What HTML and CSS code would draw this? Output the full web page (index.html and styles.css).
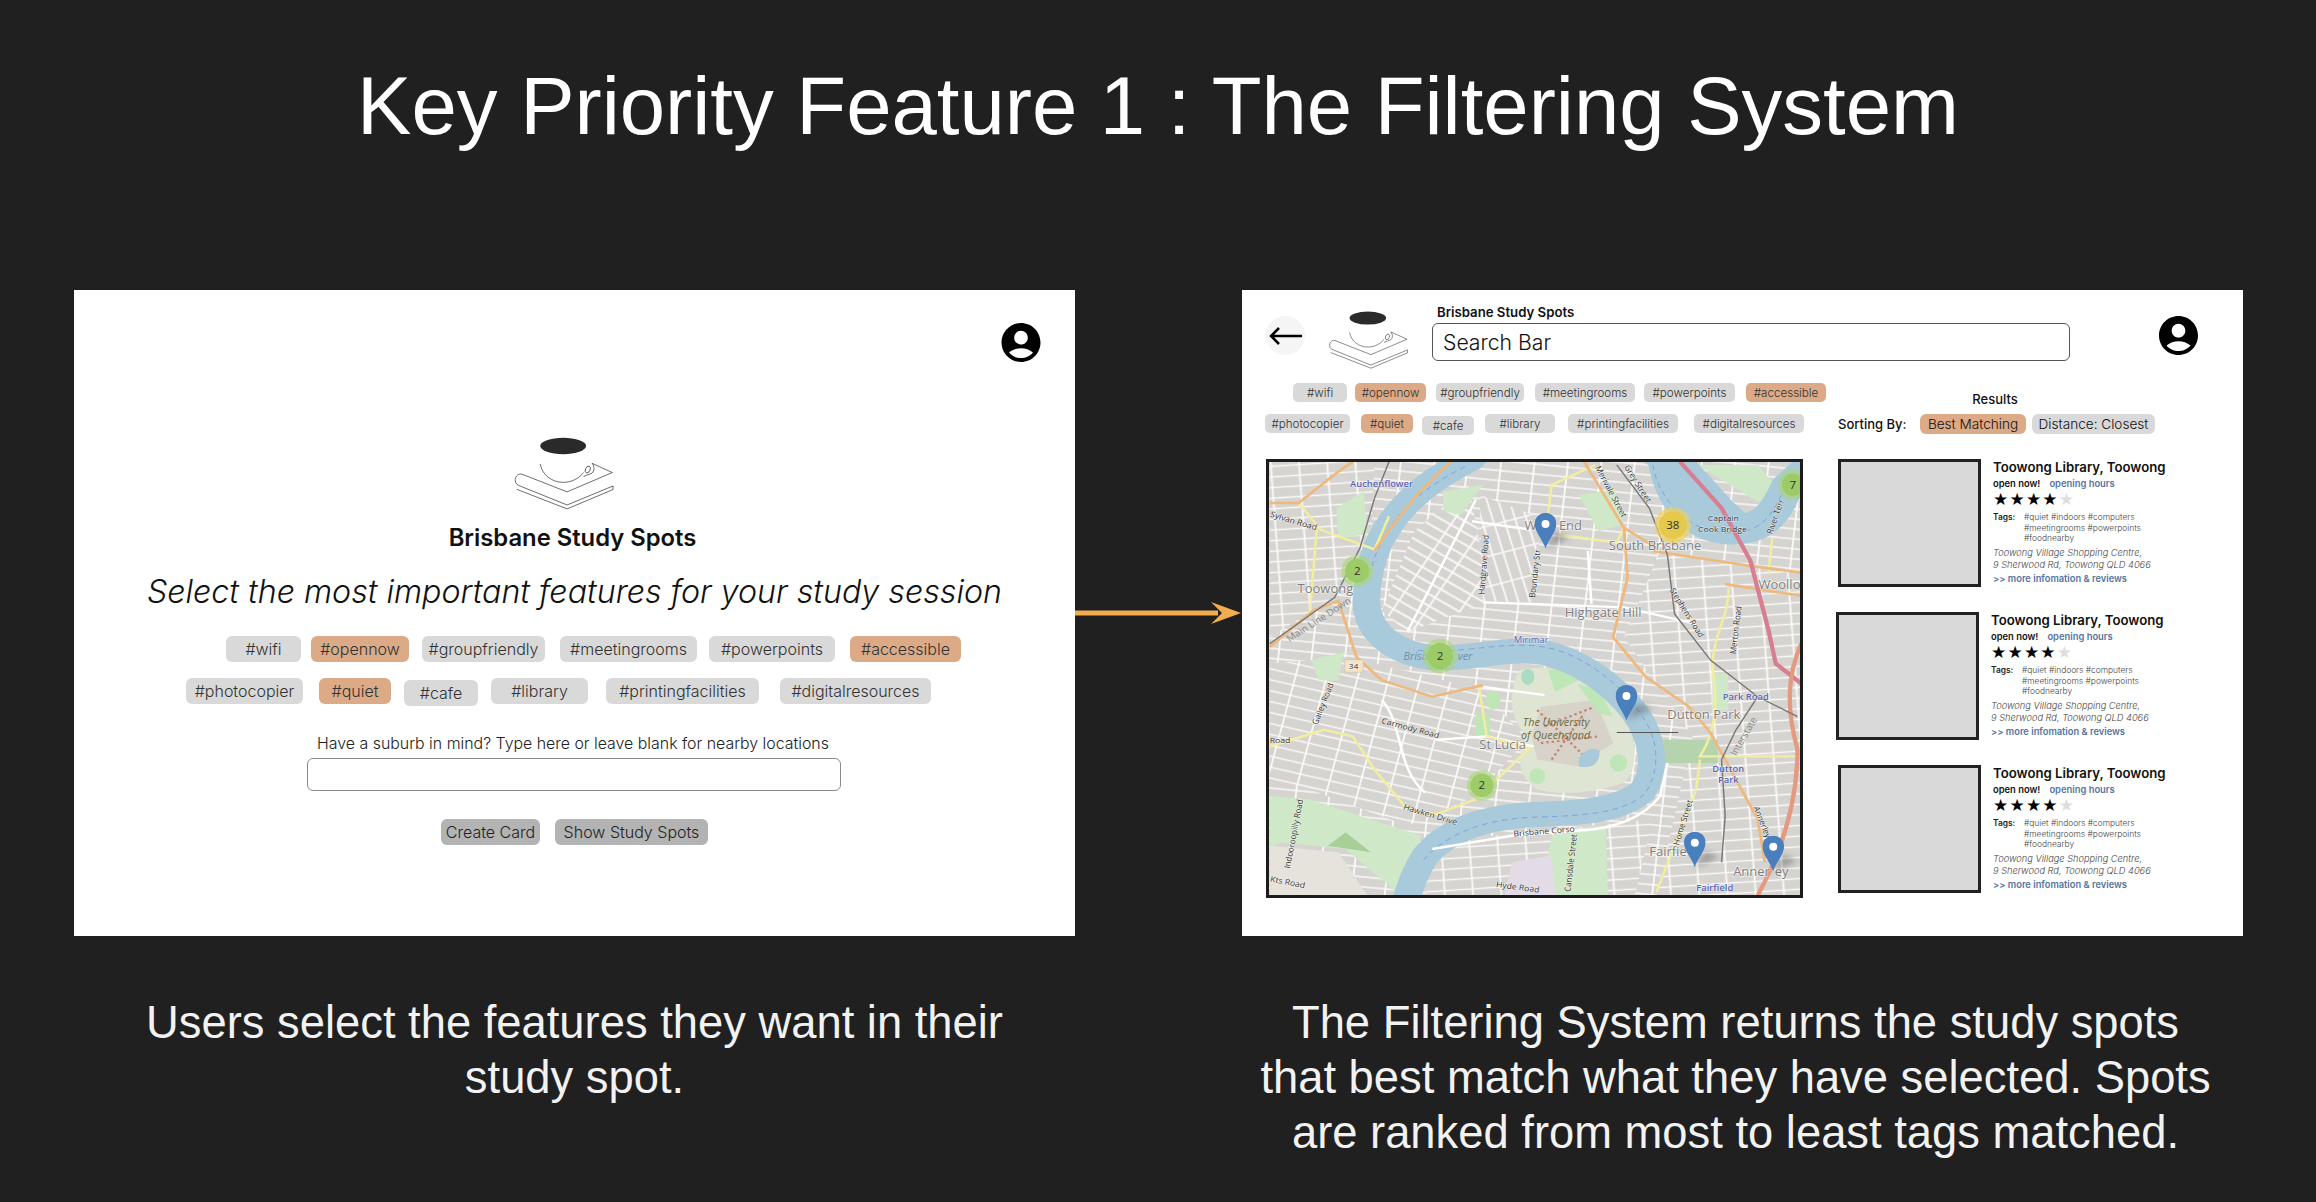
FILE: index.html
```html
<!DOCTYPE html>
<html lang="en">
<head>
    <meta charset="UTF-8">
    <title>Key Priority Feature 1 : The Filtering System</title>
    <link rel="stylesheet" href="styles.css">
</head>
<body>
    <svg class="defs" width="0" height="0">
        <symbol id="profile" viewBox="2 2 20 20">
            <path d="M12 2C6.48 2 2 6.48 2 12s4.48 10 10 10 10-4.48 10-10S17.52 2 12 2zm0 4c1.93 0 3.5 1.57 3.5 3.5S13.93 13 12 13s-3.5-1.57-3.5-3.5S10.07 6 12 6zm0 14c-2.03 0-4.43-.82-6.14-2.88C7.55 15.8 9.68 15 12 15s4.45.8 6.14 2.12C16.43 19.18 14.03 20 12 20z"/>
        </symbol>
        <symbol id="logo" viewBox="100 50 305 222">
            <ellipse cx="250" cy="77" rx="70" ry="25" fill="#2a2a2a"/>
            <g fill="none" stroke="#222" stroke-width="2">
                <path d="M180 132C186 166 216 188 250 188C280 188 302 172 312 158"/>
                <path d="M338 130L400 158L262 217L124 163C110 160 102 174 104 184C105 192 110 196 118 199L262 257L402 199"/>
                <path d="M108 209L262 269L402 210V199"/>
                <path d="M338 130C346 140 346 152 338 160L312 170"/>
                <ellipse cx="325" cy="149" rx="7" ry="11" transform="rotate(25 325 149)"/>
            </g>
        </symbol>
        <symbol id="pin" viewBox="0 0 60 107">
            <path d="M30 107C24 84 0 58 0 32C0 14 13 0 30 0C47 0 60 14 60 32C60 58 36 84 30 107Z" fill="#4a7fbe"/>
            <ellipse cx="30" cy="33" rx="11" ry="12" fill="#fff"/>
        </symbol>
    </svg>

    <h1 class="title">Key Priority Feature 1 : The Filtering System</h1>

    <main class="slides">
        <section class="panel panel-select">
            <svg class="profile profile-large"><use href="#profile"/></svg>
            <svg class="logo logo-large"><use href="#logo"/></svg>
            <div class="brand">Brisbane Study Spots</div>
            <h2 class="prompt">Select the most important features for your study session</h2>

            <div class="filters filters-large">
                <div class="tag-row row-one">
                    <span class="tag tag-wifi">#wifi</span>
                    <span class="tag tag-opennow on">#opennow</span>
                    <span class="tag tag-group">#groupfriendly</span>
                    <span class="tag tag-meeting">#meetingrooms</span>
                    <span class="tag tag-power">#powerpoints</span>
                    <span class="tag tag-access on">#accessible</span>
                </div>
                <div class="tag-row row-two">
                    <span class="tag tag-photo">#photocopier</span>
                    <span class="tag tag-quiet on">#quiet</span>
                    <span class="tag tag-cafe">#cafe</span>
                    <span class="tag tag-library">#library</span>
                    <span class="tag tag-print">#printingfacilities</span>
                    <span class="tag tag-digital">#digitalresources</span>
                </div>
            </div>

            <label class="suburb-label">Have a suburb in mind? Type here or leave blank for nearby locations</label>
            <div class="suburb-input"></div>
            <div class="actions">
                <span class="btn btn-create">Create Card</span>
                <span class="btn btn-show">Show Study Spots</span>
            </div>
        </section>

        <div class="arrow">
            <svg width="167" height="30" viewBox="0 0 167 30">
                <path d="M0 12.4H143V17.6H0ZM136 4L166 15L136 26L147 15Z" fill="#f2ad4e"/>
            </svg>
        </div>

        <section class="panel panel-results">
            <header class="search-head">
                <div class="back">
                    <svg width="33" height="18" viewBox="0 0 33 18"><path d="M33 9H2M10 1L2 9L10 17" fill="none" stroke="#000" stroke-width="2.5"/></svg>
                </div>
                <svg class="logo logo-small"><use href="#logo"/></svg>
                <div class="search-col">
                    <div class="brand-small">Brisbane Study Spots</div>
                    <div class="search-bar">Search Bar</div>
                </div>
                <svg class="profile profile-small"><use href="#profile"/></svg>
            </header>

            <div class="results-body">
                <div class="map-col">
                    <div class="filters filters-small">
                        <div class="tag-row row-one">
                            <span class="tag tag-wifi">#wifi</span>
                            <span class="tag tag-opennow on">#opennow</span>
                            <span class="tag tag-group">#groupfriendly</span>
                            <span class="tag tag-meeting">#meetingrooms</span>
                            <span class="tag tag-power">#powerpoints</span>
                            <span class="tag tag-access on">#accessible</span>
                        </div>
                        <div class="tag-row row-two">
                            <span class="tag tag-photo">#photocopier</span>
                            <span class="tag tag-quiet on">#quiet</span>
                            <span class="tag tag-cafe">#cafe</span>
                            <span class="tag tag-library">#library</span>
                            <span class="tag tag-print">#printingfacilities</span>
                            <span class="tag tag-digital">#digitalresources</span>
                        </div>
                    </div>

                    <svg class="map" viewBox="48 31 1469 1308" preserveAspectRatio="none">
                        <defs>
                            <pattern id="streets-a" width="92" height="30" patternUnits="userSpaceOnUse" patternTransform="rotate(6)">
                                <rect width="92" height="30" fill="#d6d4d1"/>
                                <path d="M0 15H92M46 0V30" stroke="#fbfaf8" stroke-width="5"/>
                            </pattern>
                            <pattern id="streets-b" width="30" height="88" patternUnits="userSpaceOnUse" patternTransform="rotate(-16)">
                                <rect width="30" height="88" fill="#d6d4d1"/>
                                <path d="M15 0V88M0 44H30" stroke="#fbfaf8" stroke-width="5"/>
                            </pattern>
                            <pattern id="streets-c" width="84" height="32" patternUnits="userSpaceOnUse" patternTransform="rotate(14)">
                                <rect width="84" height="32" fill="#d6d4d1"/>
                                <path d="M0 16H84M30 0V32" stroke="#fbfaf8" stroke-width="5"/>
                            </pattern>
                            <pattern id="streets-d" width="78" height="32" patternUnits="userSpaceOnUse" patternTransform="rotate(-4)">
                                <rect width="78" height="32" fill="#d6d4d1"/>
                                <path d="M0 16H78M50 0V32" stroke="#fbfaf8" stroke-width="5"/>
                            </pattern>
                            <pattern id="streets-e" width="80" height="30" patternUnits="userSpaceOnUse" patternTransform="rotate(32)">
                                <rect width="80" height="30" fill="#d6d4d1"/>
                                <path d="M0 15H80M24 0V30" stroke="#fbfaf8" stroke-width="5"/>
                            </pattern>
                            <filter id="soft"><feGaussianBlur stdDeviation="1.2"/></filter>
                            <filter id="shadow"><feGaussianBlur stdDeviation="9"/></filter>
                        </defs>

                        <g filter="url(#soft)">
                            <rect x="0" y="0" width="1600" height="1400" fill="url(#streets-a)"/>
                            <path d="M50 30H340L330 300L270 410L50 560Z" fill="url(#streets-d)"/>
                            <path d="M360 480L450 240L600 100L660 450L430 545Z" fill="url(#streets-e)"/>
                            <path d="M630 130L640 460L780 460L800 200Z" fill="url(#streets-b)"/>
                            <path d="M50 640L270 620L640 720L760 870L620 1040L430 1130L160 1020L50 1000Z" fill="url(#streets-c)"/>
                            <path d="M1130 300L1520 360V1340H1120L1220 860L1030 560Z" fill="url(#streets-d)"/>
                            <path d="M500 1180L1110 1110L1060 1340H480Z" fill="url(#streets-d)"/>

                            <!-- parks -->
                            <g fill="#cfe9c8">
                                <path d="M50 1040L160 1050L300 1100L470 1160L400 1330L260 1200L80 1180L50 1200Z"/>
                                <path d="M830 1160L900 1140L980 1130L985 1340H800Z"/>
                                <path d="M235 170L310 120L320 250L240 260Z"/>
                                <path d="M905 130L1005 115L1030 220L960 240Z"/>
                                <path d="M1140 870H1290V940H1130Z" fill="#b5d4ae"/>
                                <path d="M1232 40H1400L1480 140L1400 150Z"/>
                                <path d="M165 630L255 605L240 690L185 690Z"/>
                                <path d="M1275 670H1318V780H1275Z"/>
                                <path d="M530 120L640 100L580 190L530 180Z"/>
                            </g>
                            <path d="M50 1190L240 1210L320 1340H50Z" fill="#e6e3dd"/>
                            <path d="M210 1190L260 1150L330 1210Z" fill="#a7cf97"/>
                            <path d="M720 1240L830 1220L840 1340H700Z" fill="#e3dbe6"/>

                            <!-- campus -->
                            <path d="M740 660C840 630 950 690 1020 780C1070 860 1070 960 1030 1000C950 1030 860 1040 790 1020C740 990 730 920 760 860C700 790 720 700 740 660Z" fill="#dfe5d3"/>
                            <path d="M800 770L950 750L1000 880L900 950L790 930L775 860Z" fill="#d8d3c8"/>
                            <path d="M810 830L950 770M800 880L960 860M830 930L920 790M790 780L930 930" stroke="#c4897c" stroke-width="7" stroke-dasharray="7 8" fill="none"/>
                            <g fill="#bfe6b6">
                                <ellipse cx="790" cy="980" rx="22" ry="24"/>
                                <ellipse cx="1015" cy="940" rx="24" ry="26"/>
                                <ellipse cx="668" cy="750" rx="20" ry="28"/>
                                <ellipse cx="764" cy="680" rx="18" ry="24" fill="#a9dcc0"/>
                                <path d="M820 660L870 650L905 690L840 725Z"/>
                                <path d="M900 700L960 720L1000 800L960 790Z"/>
                                <path d="M620 790H660V860H620Z"/>
                            </g>

                            <!-- river -->
                            <g fill="none" stroke="#a8cadb" stroke-linecap="round" stroke-linejoin="round">
                                <path stroke-width="76" d="M610 20C520 70 430 130 370 240C330 310 315 400 318 470C330 560 410 610 500 622C600 630 700 590 800 605C900 625 1000 700 1062 790C1112 870 1122 960 1082 1024C1020 1090 880 1092 760 1097C640 1107 540 1142 480 1222C450 1272 440 1312 425 1362"/>
                                <path stroke-width="90" d="M1140 10C1150 120 1210 230 1320 235C1420 240 1450 180 1480 110L1530 60"/>
                            </g>
                            <path d="M1085 30L1230 30L1330 150L1380 200L1290 190L1200 130Z" fill="#a8cadb"/>
                            <path d="M905 925C920 900 950 890 962 905C965 940 940 960 905 950Z" fill="#a8cadb"/>
                            <path fill="none" stroke="#7d9bdc" stroke-width="2.5" stroke-dasharray="16 12" d="M590 45C510 90 420 150 365 260C335 320 325 370 345 330M460 600C600 610 700 570 810 590C910 610 1010 690 1075 790C1130 870 1130 960 1090 1030C1030 1100 880 1100 760 1105C640 1115 540 1150 470 1240"/>
                            <path fill="none" stroke="#7d9bdc" stroke-width="2.5" stroke-dasharray="16 12" d="M1110 40C1120 120 1190 240 1310 245C1410 250 1440 190 1470 120"/>

                            <!-- main roads -->
                            <g fill="none" stroke="#fff" stroke-width="7">
                                <path d="M610 210L770 235M640 455L900 465L1030 470L1230 520M620 145L430 545M640 710L810 735M510 870L650 860L780 890M360 750C420 820 400 960 480 1030M900 1145C1000 1140 1080 1110 1130 1040L1150 940M500 1200L720 1160L900 1145M930 300L940 460"/>
                            </g>
                            <g fill="none" stroke="#f1eea0" stroke-width="7">
                                <path d="M820 185L830 100L950 40M850 250L1010 275L1030 230M180 235L160 500M130 155L190 235L340 295L380 195M630 715L650 860L770 895L620 1050L510 1095L430 1080L340 960L280 860L200 840L50 890M1320 410C1320 520 1260 560 1280 700C1290 800 1270 870 1240 920H1520M1240 930L1230 1020L1120 1330M1440 260L1430 370"/>
                            </g>
                            <g fill="none" stroke="#eeb97e" stroke-width="8">
                                <path d="M50 155H130L240 60L280 30M340 300C400 200 480 100 550 30M920 30L1030 230L1040 380L1000 560L1090 680L1210 770L1270 850L1330 970L1400 1110L1420 1240M50 590L170 480L240 450L290 620L360 690L500 740L640 705M1110 300L1380 345L1520 365M1310 400L1520 435M1030 230L1120 290"/>
                            </g>
                            <path d="M1185 30L1300 170L1380 330L1430 540L1450 640L1520 700" fill="none" stroke="#d77f90" stroke-width="12"/>
                            <path d="M1520 580C1480 680 1480 780 1510 900C1510 1050 1470 1200 1400 1340" fill="none" stroke="#e39a80" stroke-width="12"/>
                            <g fill="none" stroke="#777" stroke-width="4">
                                <path d="M1010 40L1100 170L1150 310L1170 490L1270 630L1400 740L1510 800M380 30L340 140L300 290L230 440L50 580M1400 740L1340 840L1300 930L1310 1100L1300 1240"/>
                            </g>
                            <path d="M1010 848H1180" stroke="#555" stroke-width="3"/>
                        </g>

                        <!-- labels -->
                        <g class="map-labels">
                            <text class="suburb" x="127" y="428">Toowong</text>
                            <text class="suburb" x="755" y="236">W</text>
                            <text class="suburb" x="850" y="236">End</text>
                            <text class="suburb" x="988" y="297">South Brisbane</text>
                            <text class="suburb" x="866" y="498">Highgate Hill</text>
                            <text class="suburb" x="630" y="898">St Lucia</text>
                            <text class="suburb" x="1150" y="807">Dutton Park</text>
                            <text class="suburb" x="1402" y="416">Woollo</text>
                            <text class="suburb" x="1100" y="1222">Fairfie</text>
                            <text class="suburb" x="1332" y="1282">Anner</text>
                            <text class="suburb" x="1447" y="1282">ey</text>
                            <text class="station" x="272" y="108">Auchenflower</text>
                            <text class="station station-thin" x="725" y="577">Mirimar</text>
                            <text class="station" x="1303" y="750">Park Road</text>
                            <text class="station" x="1274" y="967">Dutton</text>
                            <text class="station" x="1290" y="1000">Park</text>
                            <text class="station" x="1230" y="1328">Fairfield</text>
                            <text class="water" x="420" y="628">Brisb</text>
                            <text class="water" x="570" y="628">ver</text>
                            <text class="uni" x="750" y="829">The University</text>
                            <text class="uni" x="745" y="868">of Queensland</text>
                            <text class="road" x="1262" y="209">Captain</text>
                            <text class="road" x="1235" y="243">Cook Bridge</text>
                            <text class="road" x="50" y="196" transform="rotate(18 50 196)">Sylvan Road</text>
                            <text class="road" x="358" y="820" transform="rotate(16 358 820)">Carmody Road</text>
                            <text class="road" x="725" y="1162" transform="rotate(-5 725 1162)">Brisbane Corso</text>
                            <text class="road" x="418" y="1080" transform="rotate(18 418 1080)">Hawken Drive</text>
                            <text class="road" x="675" y="1315" transform="rotate(8 675 1315)">Hyde Road</text>
                            <text class="road" x="50" y="1298" transform="rotate(12 50 1298)">Kts Road</text>
                            <text class="road" x="644" y="432" transform="rotate(-86 644 432)">Hardgrave Road</text>
                            <text class="road" x="784" y="442" transform="rotate(-84 784 442)">Boundary Str</text>
                            <text class="road" x="950" y="48" transform="rotate(64 950 48)">Merivale Street</text>
                            <text class="road" x="1030" y="46" transform="rotate(60 1030 46)">Grey Street</text>
                            <text class="road" x="1155" y="418" transform="rotate(60 1155 418)">Stephens Road</text>
                            <text class="road" x="1340" y="612" transform="rotate(-84 1340 612)">Merton Road</text>
                            <text class="road" x="1440" y="250" transform="rotate(-72 1440 250)">River Terr</text>
                            <text class="road" x="182" y="826" transform="rotate(-70 182 826)">Gailey Road</text>
                            <text class="road" x="106" y="1260" transform="rotate(-80 106 1260)">Indooroopilly Road</text>
                            <text class="road" x="882" y="1330" transform="rotate(-84 882 1330)">Cansdale Street</text>
                            <text class="road" x="1182" y="1190" transform="rotate(-74 1182 1190)">Home Street</text>
                            <text class="road" x="1388" y="1075" transform="rotate(70 1388 1075)">Annerley Road</text>
                            <text class="road" x="50" y="880">Road</text>
                            <text class="line" x="105" y="575" transform="rotate(-35 105 575)">Main Line Down</text>
                            <text class="line" x="1340" y="920" transform="rotate(-62 1340 920)">Interstate</text>
                            <rect x="257" y="628" width="52" height="38" rx="6" fill="#f4e3c9" stroke="#bdaa8e"/>
                            <text class="road" x="268" y="656">34</text>
                        </g>

                        <!-- clusters -->
                        <g class="cluster">
                            <ellipse cx="292" cy="360" rx="44" ry="48" fill="#a8d675" fill-opacity=".6"/>
                            <ellipse cx="292" cy="360" rx="33" ry="36" fill="#9ccb68"/>
                            <text x="292" y="372">2</text>
                            <ellipse cx="521" cy="617" rx="48" ry="52" fill="#a8d675" fill-opacity=".6"/>
                            <ellipse cx="521" cy="617" rx="36" ry="40" fill="#9ccb68"/>
                            <text x="521" y="629">2</text>
                            <ellipse cx="637" cy="1008" rx="42" ry="46" fill="#a8d675" fill-opacity=".6"/>
                            <ellipse cx="637" cy="1008" rx="32" ry="35" fill="#9ccb68"/>
                            <text x="637" y="1020">2</text>
                            <ellipse cx="1165" cy="222" rx="50" ry="54" fill="#efd25f" fill-opacity=".7"/>
                            <ellipse cx="1165" cy="222" rx="38" ry="42" fill="#e6c84a"/>
                            <text x="1165" y="234">38</text>
                            <ellipse cx="1497" cy="100" rx="40" ry="46" fill="#a8d675" fill-opacity=".6"/>
                            <ellipse cx="1497" cy="100" rx="30" ry="34" fill="#9ccb68"/>
                            <text x="1497" y="112">7</text>
                        </g>

                        <!-- pins -->
                        <g fill="#555" fill-opacity=".45" filter="url(#shadow)">
                            <path d="M813 292L840 240L880 260Z"/>
                            <path d="M1037 812L1065 760L1110 775Z"/>
                            <path d="M1226 1255L1254 1205L1296 1225Z"/>
                            <path d="M1443 1267L1471 1217L1510 1237Z"/>
                        </g>
                        <use href="#pin" x="783" y="185" width="60" height="107"/>
                        <use href="#pin" x="1007" y="705" width="60" height="107"/>
                        <use href="#pin" x="1196" y="1148" width="60" height="107"/>
                        <use href="#pin" x="1413" y="1160" width="60" height="107"/>
                    </svg>
                </div>

                <div class="result-col">
                    <div class="result-head">
                        <div class="results-title">Results</div>
                        <div class="sort-row">
                            <span class="sort-label">Sorting By:</span>
                            <span class="sort-chip on chip-best">Best Matching</span>
                            <span class="sort-chip chip-distance">Distance: Closest</span>
                        </div>
                    </div>

                    <article class="card">
                        <div class="photo"></div>
                        <div class="info">
                            <h3>Toowong Library, Toowong</h3>
                            <p class="hours"><b>open now!</b><span>opening hours</span></p>
                            <p class="stars">★★★★<i>★</i></p>
                            <div class="card-tags"><b>Tags:</b><span>#quiet #indoors #computers<br>#meetingrooms #powerpoints<br>#foodnearby</span></div>
                            <p class="address">Toowong Village Shopping Centre,<br>9 Sherwood Rd, Toowong QLD 4066</p>
                            <p class="more">&gt;&gt; more infomation &amp; reviews</p>
                        </div>
                    </article>
                    <article class="card card-shifted">
                        <div class="photo"></div>
                        <div class="info">
                            <h3>Toowong Library, Toowong</h3>
                            <p class="hours"><b>open now!</b><span>opening hours</span></p>
                            <p class="stars">★★★★<i>★</i></p>
                            <div class="card-tags"><b>Tags:</b><span>#quiet #indoors #computers<br>#meetingrooms #powerpoints<br>#foodnearby</span></div>
                            <p class="address">Toowong Village Shopping Centre,<br>9 Sherwood Rd, Toowong QLD 4066</p>
                            <p class="more">&gt;&gt; more infomation &amp; reviews</p>
                        </div>
                    </article>
                    <article class="card">
                        <div class="photo"></div>
                        <div class="info">
                            <h3>Toowong Library, Toowong</h3>
                            <p class="hours"><b>open now!</b><span>opening hours</span></p>
                            <p class="stars">★★★★<i>★</i></p>
                            <div class="card-tags"><b>Tags:</b><span>#quiet #indoors #computers<br>#meetingrooms #powerpoints<br>#foodnearby</span></div>
                            <p class="address">Toowong Village Shopping Centre,<br>9 Sherwood Rd, Toowong QLD 4066</p>
                            <p class="more">&gt;&gt; more infomation &amp; reviews</p>
                        </div>
                    </article>
                </div>
            </div>
        </section>
    </main>

    <footer class="captions">
        <p class="caption caption-left">Users select the features they want in their<br>study spot.</p>
        <p class="caption caption-right">The Filtering System returns the study spots<br>that best match what they have selected. Spots<br>are ranked from most to least tags matched.</p>
    </footer>
</body>
</html>
```

FILE: styles.css
```css
* {
    box-sizing: border-box;
}
body {
    margin: 0;
    width: 2316px;
    height: 1202px;
    overflow: hidden;
    background-color: #202020;
    font-family: "Liberation Sans", Arial, sans-serif;
    color: #fff;
}
.defs {
    display: block;
    height: 0;
}
.title {
    margin: 0;
    padding-top: 59px;
    height: 290px;
    text-align: center;
    font-size: 81.5px;
    line-height: 94px;
    font-weight: 400;
}
.slides {
    display: flex;
    padding-left: 74px;
}
.panel {
    width: 1001px;
    height: 646px;
    background: #fff;
    color: #111;
    font-family: Inter, "Liberation Sans", sans-serif;
}
.arrow {
    width: 167px;
    display: flex;
    align-items: center;
    height: 646px;
}

/* select panel */
.panel-select {
    display: flex;
    flex-direction: column;
    align-items: center;
}
.profile {
    display: block;
    fill: #000;
}
.profile-large {
    align-self: flex-end;
    width: 40px;
    height: 39px;
    margin: 33px 34px 0 0;
}
.logo {
    display: block;
    flex: none;
}
.logo-large {
    width: 100px;
    height: 73px;
    margin: 75px 21px 0 0;
}
.brand {
    margin: 14px 4px 0 0;
    font-size: 23.8px;
    line-height: 28px;
    font-weight: 600;
}
.prompt {
    margin: 20px 0 0;
    font-size: 32.2px;
    line-height: 40px;
    font-weight: 300;
    font-style: italic;
}
.filters {
    align-self: stretch;
}
.tag-row {
    display: flex;
}
.tag {
    flex: none;
    display: flex;
    align-items: center;
    justify-content: center;
    background: #d9d9d9;
    color: #333;
    white-space: nowrap;
    font-weight: 300;
}
.tag.on {
    background: #dcaa87;
}

.filters-large {
    margin-top: 24px;
}
.filters-large .tag {
    height: 26px;
    border-radius: 6px;
    font-size: 16px;
}
.filters-large .row-two {
    margin-top: 16px;
    height: 28px;
}
.filters-large .tag-wifi { margin-left: 152px; width: 75px; }
.filters-large .tag-opennow { margin-left: 10px; width: 98px; }
.filters-large .tag-group { margin-left: 13px; width: 123px; }
.filters-large .tag-meeting { margin-left: 15px; width: 137px; }
.filters-large .tag-power { margin-left: 12px; width: 126px; }
.filters-large .tag-access { margin-left: 15px; width: 111px; }
.filters-large .tag-photo { margin-left: 112px; width: 117px; }
.filters-large .tag-quiet { margin-left: 16px; width: 72px; }
.filters-large .tag-cafe { margin: 2px 0 0 13px; width: 74px; }
.filters-large .tag-library { margin-left: 13px; width: 97px; }
.filters-large .tag-print { margin-left: 18px; width: 153px; }
.filters-large .tag-digital { margin-left: 21px; width: 151px; }

.suburb-label {
    margin: 28px 3px 0 0;
    font-size: 15.9px;
    line-height: 20px;
    font-weight: 300;
    color: #222;
}
.suburb-input {
    width: 534px;
    height: 33px;
    margin: 4px 0 0 -2px;
    border: 1.5px solid #8a8a8a;
    border-radius: 6px;
}
.actions {
    display: flex;
    margin: 28px 0 0;
    gap: 15px;
}
.btn {
    display: flex;
    align-items: center;
    justify-content: center;
    height: 26px;
    background: #b3b3b3;
    border-radius: 6px;
    color: #222;
    font-size: 16px;
    font-weight: 300;
    white-space: nowrap;
}
.btn-create {
    width: 99px;
}
.btn-show {
    width: 153px;
}

/* results panel */
.panel-results {
    padding: 14px 0 0 24px;
}
.search-head {
    display: flex;
    height: 65px;
}
.back {
    width: 39px;
    height: 39px;
    margin-top: 12px;
    border-radius: 50%;
    background: #f5f5f5;
    display: flex;
    align-items: center;
    justify-content: center;
}
.logo-small {
    width: 81px;
    height: 58px;
    margin: 7px 0 0 23px;
}
.search-col {
    width: 638px;
    margin-left: 23px;
}
.brand-small {
    padding-left: 5px;
    font-size: 13.2px;
    line-height: 16px;
    font-weight: 600;
}
.search-bar {
    height: 38px;
    margin-top: 3px;
    padding-left: 10px;
    border: 1.5px solid #555;
    border-radius: 6px;
    font-size: 21.2px;
    line-height: 36px;
    font-weight: 300;
}
.profile-small {
    width: 41px;
    height: 39px;
    margin: 12px 0 0 88px;
}
.results-body {
    display: flex;
    margin-top: 14px;
}
.map-col {
    width: 537px;
}
.filters-small {
    height: 76px;
}
.filters-small .tag {
    height: 19px;
    border-radius: 5px;
    font-size: 11.6px;
}
.filters-small .row-two {
    margin-top: 12px;
}
.filters-small .tag-wifi { margin-left: 27px; width: 54px; }
.filters-small .tag-opennow { margin-left: 8px; width: 71px; }
.filters-small .tag-group { margin-left: 10px; width: 88px; }
.filters-small .tag-meeting { margin-left: 11px; width: 100px; }
.filters-small .tag-power { margin-left: 9px; width: 91px; }
.filters-small .tag-access { margin-left: 11px; width: 80px; }
.filters-small .tag-photo { margin-left: -1px; width: 85px; }
.filters-small .tag-quiet { margin-left: 11px; width: 52px; }
.filters-small .tag-cafe { margin: 2px 0 0 9px; width: 52px; }
.filters-small .tag-library { margin-left: 11px; width: 70px; }
.filters-small .tag-print { margin-left: 13px; width: 110px; }
.filters-small .tag-digital { margin-left: 16px; width: 110px; }

.map {
    display: block;
    width: 537px;
    height: 439px;
    border: 3px solid #1c1c1c;
    background: #d6d4d1;
}
.map-labels text {
    font-family: "Open Sans", "Noto Sans", sans-serif;
}
.map-labels .suburb {
    font-size: 36px;
    fill: #807e7c;
    stroke: #fff;
    stroke-width: 4px;
    stroke-opacity: .6;
    paint-order: stroke;
}
.map-labels .station {
    font-size: 26px;
    font-weight: 600;
    fill: #5b62b4;
    stroke: #fff;
    stroke-width: 3px;
    stroke-opacity: .6;
    paint-order: stroke;
}
.map-labels .station-thin {
    font-weight: 400;
}
.map-labels .water {
    font-size: 30px;
    font-style: italic;
    fill: #6d8fb0;
}
.map-labels .uni {
    font-size: 30px;
    font-style: italic;
    fill: #6f6a3f;
}
.map-labels .road {
    font-size: 24px;
    fill: #333;
    stroke: #fff;
    stroke-width: 3px;
    stroke-opacity: .6;
    paint-order: stroke;
}
.map-labels .line {
    font-size: 28px;
    fill: #888;
}
.cluster text {
    font-family: "Open Sans", "Noto Sans", sans-serif;
    font-size: 32px;
    text-anchor: middle;
    fill: #333;
}

.result-col {
    width: 360px;
    margin-left: 35px;
}
.result-head {
    height: 76px;
    padding-top: 8px;
}
.results-title {
    width: 314px;
    text-align: center;
    font-size: 13px;
    line-height: 16px;
    font-weight: 500;
}
.sort-row {
    display: flex;
    align-items: center;
    margin-top: 7px;
    height: 20px;
}
.sort-label {
    width: 82px;
    font-size: 13px;
    font-weight: 500;
}
.sort-chip {
    display: flex;
    align-items: center;
    justify-content: center;
    height: 20px;
    border-radius: 6px;
    background: #d9d9d9;
    font-size: 13.6px;
    font-weight: 300;
    white-space: nowrap;
}
.sort-chip.on {
    background: #dcaa87;
}
.chip-best {
    width: 106px;
}
.chip-distance {
    width: 123px;
    margin-left: 6px;
}
.card {
    display: flex;
    height: 128px;
    margin-bottom: 25px;
}
.card-shifted {
    margin-left: -2px;
}
.photo {
    flex: none;
    width: 143px;
    height: 128px;
    border: 3px solid #222;
    background: #d9d9d9;
}
.info {
    margin-left: 12px;
    width: 200px;
}
.info h3 {
    margin: 0;
    font-size: 13.2px;
    line-height: 16px;
    font-weight: 600;
    white-space: nowrap;
}
.info p {
    margin: 0;
}
.info .hours {
    margin-top: 3px;
    font-size: 9.4px;
    line-height: 12px;
    white-space: nowrap;
}
.hours b {
    font-weight: 600;
}
.hours span {
    margin-left: 9px;
    font-weight: 600;
    color: #5474a2;
}
.info .stars {
    height: 18px;
    font-family: "DejaVu Sans", sans-serif;
    font-size: 17px;
    line-height: 18px;
    letter-spacing: 1.2px;
    color: #000;
}
.stars i {
    font-style: normal;
    color: #dedede;
}
.card-tags {
    display: flex;
    margin-top: 4px;
    font-size: 8.4px;
    line-height: 10.7px;
    font-weight: 300;
    color: #444;
    white-space: nowrap;
}
.card-tags b {
    width: 31px;
    font-weight: 600;
    color: #222;
}
.info .address {
    margin-top: 3px;
    font-size: 9.25px;
    line-height: 11.5px;
    font-style: italic;
    font-weight: 300;
    color: #444;
    white-space: nowrap;
}
.info .more {
    margin-top: 3px;
    font-size: 9.3px;
    line-height: 12px;
    font-weight: 600;
    color: #5474a2;
    white-space: nowrap;
}

/* captions */
.captions {
    display: flex;
    padding: 59px 0 0 74px;
}
.caption {
    margin: 0;
    width: 1001px;
    text-align: center;
    font-size: 45.35px;
    line-height: 55px;
    color: #f2f2f2;
}
.caption-right {
    margin-left: 160px;
}
```
